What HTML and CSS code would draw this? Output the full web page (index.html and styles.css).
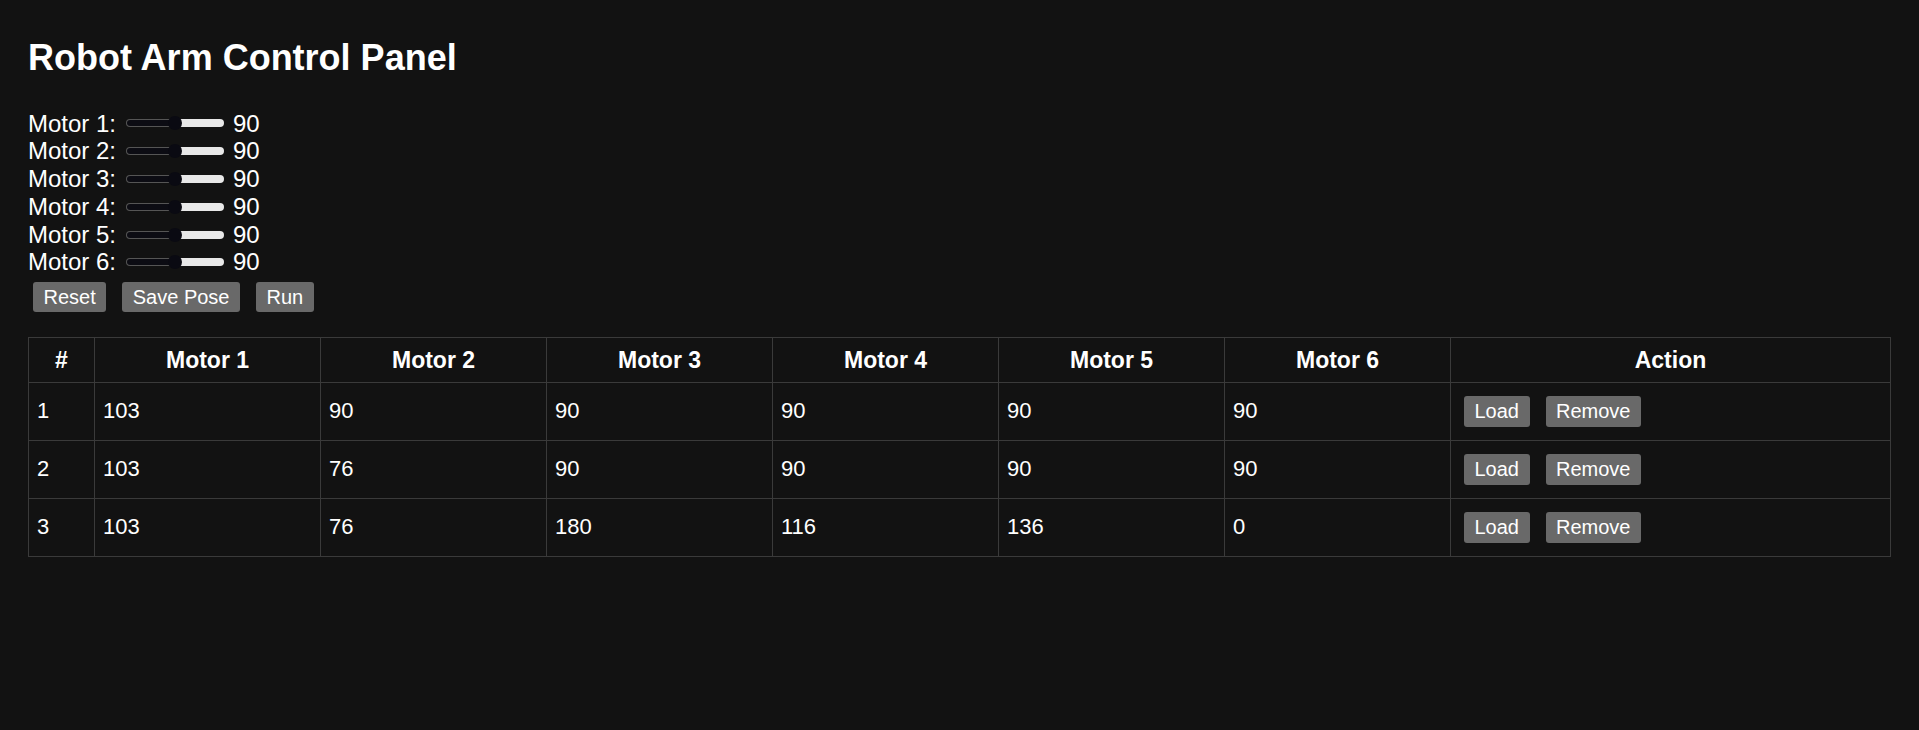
FILE: index.html
```html
<!DOCTYPE html>
<html lang="en">
<head>
<meta charset="utf-8">
<title>Robot Arm Control Panel</title>
<link rel="stylesheet" href="styles.css">
</head>
<body>
<div class="panel">
  <h1 class="title">Robot Arm Control Panel</h1>
  <div class="motors">
    <div class="motor"><span class="motor-label">Motor 1:</span><input type="range" class="slider" min="0" max="180" value="90"><span class="motor-value">90</span></div>
    <div class="motor"><span class="motor-label">Motor 2:</span><input type="range" class="slider" min="0" max="180" value="90"><span class="motor-value">90</span></div>
    <div class="motor"><span class="motor-label">Motor 3:</span><input type="range" class="slider" min="0" max="180" value="90"><span class="motor-value">90</span></div>
    <div class="motor"><span class="motor-label">Motor 4:</span><input type="range" class="slider" min="0" max="180" value="90"><span class="motor-value">90</span></div>
    <div class="motor"><span class="motor-label">Motor 5:</span><input type="range" class="slider" min="0" max="180" value="90"><span class="motor-value">90</span></div>
    <div class="motor"><span class="motor-label">Motor 6:</span><input type="range" class="slider" min="0" max="180" value="90"><span class="motor-value">90</span></div>
  </div>
  <div class="controls">
    <button class="btn">Reset</button>
    <button class="btn">Save Pose</button>
    <button class="btn">Run</button>
  </div>
  <table class="poses">
    <colgroup>
      <col class="col-num">
      <col class="col-motor">
      <col class="col-motor">
      <col class="col-motor">
      <col class="col-motor">
      <col class="col-motor">
      <col class="col-motor">
      <col class="col-action">
    </colgroup>
    <thead>
      <tr><th>#</th><th>Motor 1</th><th>Motor 2</th><th>Motor 3</th><th>Motor 4</th><th>Motor 5</th><th>Motor 6</th><th>Action</th></tr>
    </thead>
    <tbody>
      <tr><td>1</td><td>103</td><td>90</td><td>90</td><td>90</td><td>90</td><td>90</td><td><div class="actions"><button class="btn">Load</button><button class="btn">Remove</button></div></td></tr>
      <tr><td>2</td><td>103</td><td>76</td><td>90</td><td>90</td><td>90</td><td>90</td><td><div class="actions"><button class="btn">Load</button><button class="btn">Remove</button></div></td></tr>
      <tr><td>3</td><td>103</td><td>76</td><td>180</td><td>116</td><td>136</td><td>0</td><td><div class="actions"><button class="btn">Load</button><button class="btn">Remove</button></div></td></tr>
    </tbody>
  </table>
</div>
</body>
</html>
```
FILE: styles.css
```css
html, body {
  background: #121212;
}
body {
  margin: 0;
  padding: 12px 28px;
  font-family: "Liberation Sans", Arial, sans-serif;
  color: #ffffff;
}
.title {
  font-size: 36px;
  font-weight: bold;
  line-height: normal;
  margin: 25px 0 30.6px;
}
.motor {
  display: flex;
  align-items: center;
  height: 27.8px;
  font-size: 24px;
  line-height: normal;
}
.slider {
  -webkit-appearance: none;
  appearance: none;
  width: 98.6px;
  height: 14px;
  margin: 0 8.7px 0 9.7px;
  padding: 0;
  background: transparent;
}
.slider::-webkit-slider-runnable-track {
  box-sizing: border-box;
  height: 8px;
  border-radius: 4px;
  border: 1px solid transparent;
  background:
    linear-gradient(to right, #0c0c13 50%, #e8e8e8 50%) padding-box,
    linear-gradient(to right, #555555 50%, #e8e8e8 50%) border-box;
}
.slider::-webkit-slider-thumb {
  -webkit-appearance: none;
  appearance: none;
  width: 14px;
  height: 14px;
  border-radius: 50%;
  background: #0a0a12;
  border: none;
  margin-top: -4px;
}
.controls {
  display: flex;
  gap: 16px;
  padding: 4.5px 5px;
  margin-top: 1px;
}
.btn {
  font-family: "Liberation Sans", Arial, sans-serif;
  font-size: 20px;
  line-height: normal;
  color: #ffffff;
  background: #696969;
  border: none;
  border-radius: 3px;
  padding: 3.75px 10.5px;
  margin: 0;
}
.poses {
  width: 100%;
  margin-top: 20.5px;
  border-collapse: collapse;
  table-layout: fixed;
}
.col-num {
  width: 66px;
}
.col-motor {
  width: 226px;
}
.poses th,
.poses td {
  border: 1px solid #3a3a3a;
  padding: 9px 8px;
  line-height: normal;
  vertical-align: middle;
}
.poses th {
  font-size: 23px;
  font-weight: bold;
  text-align: center;
  padding-top: 8.5px;
  padding-bottom: 8px;
}
.poses td {
  font-size: 22px;
  text-align: left;
}
.actions {
  display: flex;
  gap: 16px;
  padding: 4.25px 5px;
}
```
